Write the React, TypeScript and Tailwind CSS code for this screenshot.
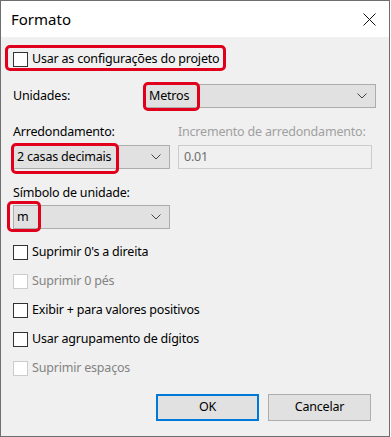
import React from "react";

const font = { fontFamily: '"Segoe UI", "Noto Sans", "DejaVu Sans", sans-serif' };

function Chevron() {
  return (
    <svg width="10" height="6" viewBox="0 0 10 6" className="shrink-0">
      <path d="M0.5 0.5 L5 5 L9.5 0.5" fill="none" stroke="#444" strokeWidth="1" />
    </svg>
  );
}

function Combo({ value, width, children }: { value: string; width: string; children?: React.ReactNode }) {
  return (
    <div className={`relative flex h-[24px] ${width} items-center justify-between border border-[#adadad] bg-[#e1e1e1] pl-[3px] pr-[8px] text-[12.5px] tracking-[-0.2px] text-black`}>
      <span>{value}</span>
      <Chevron />
      {children}
    </div>
  );
}

function Check({ label, disabled }: { label: string; disabled?: boolean }) {
  return (
    <div className="flex h-[15px] items-center gap-[4px]">
      <div className={`h-[15px] w-[15px] shrink-0 border bg-white ${disabled ? "border-[#cccccc]" : "border-[#333333]"}`} />
      <span className={`text-[12.5px] tracking-[-0.2px] ${disabled ? "text-[#838383]" : "text-black"}`}>{label}</span>
    </div>
  );
}

export default function App() {
  return (
    <div className="h-[437px] w-[391px] bg-white" style={font}>
      <div className="flex h-[437px] w-[390px] flex-col border border-[#6e6e6e] bg-[#f0f0f0]">
        <div className="flex h-[36px] shrink-0 items-center justify-between bg-white pl-[10px] pr-[13px]">
          <span className="text-[15px] text-black">Formato</span>
          <svg width="13" height="13" viewBox="0 0 13 13">
            <path d="M0.5 0.5 L12.5 12.5 M12.5 0.5 L0.5 12.5" stroke="#111" strokeWidth="1" />
          </svg>
        </div>

        <div className="flex flex-col pl-[12px] text-[12.5px] tracking-[-0.2px]">
          <div className="relative mt-[15px] flex h-[15px] items-center">
            <Check label="Usar as configurações do projeto" />
            <div className="absolute left-[-8px] top-[-7px] h-[26px] w-[221px] rounded-[5px] border-[3px] border-[#e0001b]" />
          </div>

          <div className="mt-[17px] flex h-[24px] items-center">
            <span className="w-[132px] text-black">Unidades:</span>
            <Combo value="Metros" width="w-[231px]">
              <div className="absolute left-[-3px] top-[-3px] h-[29px] w-[57px] rounded-[5px] border-[3px] border-[#e0001b]" />
            </Combo>
          </div>

          <div className="mt-[16px] flex h-[17px] items-center">
            <span className="w-[165px] text-black">Arredondamento:</span>
            <span className="text-[#a0a0a0]">Incremento de arredondamento:</span>
          </div>

          <div className="mt-[4px] flex items-center gap-[8px]">
            <Combo value="2 casas decimais" width="w-[157px]">
              <div className="absolute left-[-3px] top-[-3px] h-[31px] w-[108px] rounded-[5px] border-[3px] border-[#e0001b]" />
            </Combo>
            <div className="flex h-[24px] w-[194px] items-center border border-[#cccccc] bg-[#f0f0f0] pl-[5px] text-[#6d6d6d]">
              0.01
            </div>
          </div>

          <div className="mt-[16px] flex h-[17px] items-center text-black">Símbolo de unidade:</div>

          <div className="mt-[3px] flex">
            <Combo value="m" width="w-[157px]">
              <div className="absolute left-[-7px] top-[-5px] h-[31px] w-[34px] rounded-[5px] border-[3px] border-[#e0001b]" />
            </Combo>
          </div>

          <div className="mt-[16px] flex flex-col gap-[14px]">
            <Check label="Suprimir 0's a direita" />
            <Check label="Suprimir 0 pés" disabled />
            <Check label="Exibir + para valores positivos" />
            <Check label="Usar agrupamento de dígitos" />
            <Check label="Suprimir espaços" disabled />
          </div>

          <div className="mt-[18px] flex justify-end gap-[9px] pr-[18px]">
            <div className="flex h-[27px] w-[103px] items-center justify-center border-2 border-[#0078d7] bg-[#e1e1e1] text-black">
              OK
            </div>
            <div className="flex h-[27px] w-[103px] items-center justify-center border border-[#adadad] bg-[#e1e1e1] text-black">
              Cancelar
            </div>
          </div>
        </div>
      </div>
    </div>
  );
}
